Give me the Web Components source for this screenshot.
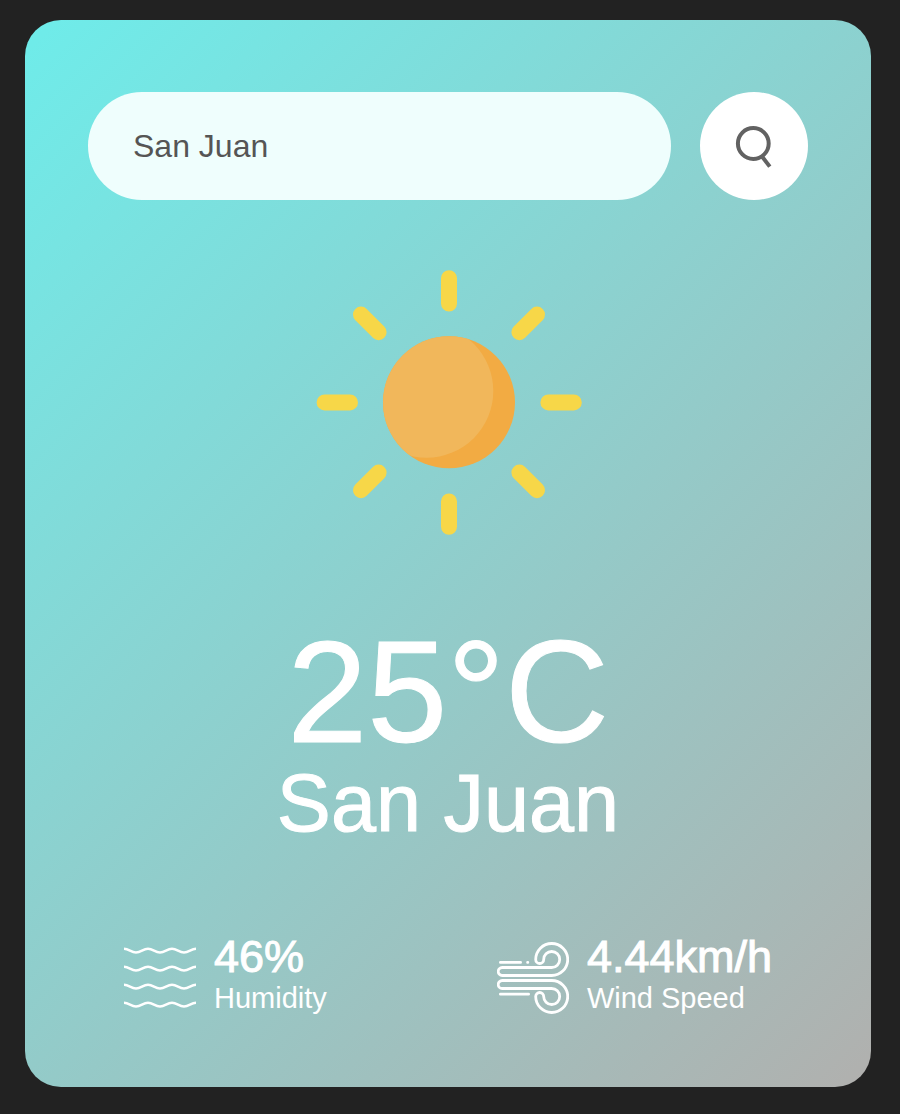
<!DOCTYPE html>
<html lang="en">
<head>
<meta charset="utf-8">
<meta name="viewport" content="width=device-width, initial-scale=1">
<title>Weather</title>
<style>
  body {
    margin: 0;
    padding: 20px 29px 27px 25px;
    background: #222;
    font-family: "Liberation Sans", Arial, sans-serif;
  }
</style>
</head>
<body>
<weather-card>
  <weather-search slot="search" value="San Juan"></weather-search>
  <weather-now temp="25°C" city="San Juan"></weather-now>
  <weather-stat slot="details" value="46%" label="Humidity">
    <svg slot="icon" width="72" height="72" viewBox="0 0 72 72" fill="none" stroke="#fff" stroke-width="2.5" aria-hidden="true">
      <path d="M0 6.8c5 0 7 3.6 12 3.6s7-3.6 12-3.6 7 3.6 12 3.6 7-3.6 12-3.6 7 3.6 12 3.6 7-3.6 12-3.6"/>
      <path d="M0 24.8c5 0 7 3.6 12 3.6s7-3.6 12-3.6 7 3.6 12 3.6 7-3.6 12-3.6 7 3.6 12 3.6 7-3.6 12-3.6"/>
      <path d="M0 42.8c5 0 7 3.6 12 3.6s7-3.6 12-3.6 7 3.6 12 3.6 7-3.6 12-3.6 7 3.6 12 3.6 7-3.6 12-3.6"/>
      <path d="M0 60.8c5 0 7 3.6 12 3.6s7-3.6 12-3.6 7 3.6 12 3.6 7-3.6 12-3.6 7 3.6 12 3.6 7-3.6 12-3.6"/>
    </svg>
  </weather-stat>
  <weather-stat slot="details" value="4.44km/h" label="Wind Speed">
    <svg slot="icon" width="72" height="72" viewBox="0 0 72 72" fill="none" stroke="#fff" stroke-width="2.8" stroke-linecap="round" aria-hidden="true">
      <path d="M5.2 25.5H54.7a8 8 0 1 0-8-8a4 4 0 0 1-8 0a16 16 0 1 1 16 16H5.2a4 4 0 0 1 0-8z"/>
      <path d="M5.2 46.5H54.7a8 8 0 1 1-8 8a4 4 0 0 0-8 0a16 16 0 1 0 16-16H5.2a4 4 0 0 0 0 8z"/>
      <path d="M3.4 20.4H23.6M30.6 20.4h.2M3.4 52.2H31.6"/>
    </svg>
  </weather-stat>
</weather-card>

<script>
  function attach(element, markup) {
    const root = element.attachShadow({ mode: "open" });
    root.innerHTML = markup;
    return root;
  }

  class WeatherCard extends HTMLElement {
    constructor() {
      super();
      attach(this, `
        <style>
          :host {
            display: block;
            box-sizing: border-box;
            padding: 72px 63px 71px;
            border-radius: 36px;
            background: linear-gradient(135deg, #6eecea, #b1b0ae);
            color: #fff;
            text-align: center;
          }
          .details {
            display: flex;
            justify-content: space-between;
            margin-top: 91px;
            padding: 0 36px;
          }
        </style>
        <slot name="search"></slot>
        <slot></slot>
        <div class="details"><slot name="details"></slot></div>`);
    }
  }

  class WeatherSearch extends HTMLElement {
    constructor() {
      super();
      const root = attach(this, `
        <style>
          :host { display: block; }
          form { display: flex; gap: 29px; }
          input, button {
            box-sizing: border-box;
            height: 108px;
            margin: 0;
            border: 0;
            outline: 0;
          }
          input {
            flex: 1;
            min-width: 0;
            padding: 0 45px;
            border-radius: 54px;
            background: #effefd;
            color: #555;
            font: 32px "Liberation Sans", Arial, sans-serif;
          }
          button {
            display: grid;
            place-items: center;
            width: 108px;
            padding: 0;
            border-radius: 50%;
            background: #fff;
            cursor: pointer;
          }
        </style>
        <form>
          <input type="text" aria-label="City" spellcheck="false">
          <button type="submit" aria-label="Search">
            <svg width="44" height="44" viewBox="0 0 44 44" fill="none" stroke="#626262" stroke-width="4">
              <circle cx="21.3" cy="19.5" r="15.4"/>
              <path d="M29.8 32.2L37.8 42.6"/>
            </svg>
          </button>
        </form>`);
      root.querySelector("input").value = this.getAttribute("value") || "";
      root.querySelector("form").addEventListener("submit", e => e.preventDefault());
    }
  }

  class WeatherNow extends HTMLElement {
    constructor() {
      super();
      const root = attach(this, `
        <style>
          :host { display: block; margin-top: 58px; }
          svg { display: block; margin: 0 auto 77px; }
          h1, h2 { margin: 0; font-weight: 400; -webkit-text-stroke: 1px currentColor; }
          h1 { font-size: 144px; line-height: 140px; }
          h2 { font-size: 81px; line-height: 80px; }
        </style>
        <svg width="288" height="288" viewBox="0 0 288 288" role="img" aria-label="Clear sky">
          <defs><clipPath id="disc"><circle cx="145" cy="144.3" r="66"/></clipPath></defs>
          <path fill="none" stroke="#f7d748" stroke-width="16" stroke-linecap="round"
            d="M145 20.2V45.6M145 243.4V268.8M20.6 144.4H46M244.4 144.4H269.8M57 56.6L74.6 74.2M233 56.6L215.4 74.2M57 232.2L74.6 214.6M233 232.2L215.4 214.6"/>
          <circle cx="145" cy="144.3" r="66" fill="#f2ab43"/>
          <circle cx="122.6" cy="133" r="66.7" fill="#f1b75b" clip-path="url(#disc)"/>
        </svg>
        <h1></h1>
        <h2></h2>`);
      root.querySelector("h1").textContent = this.getAttribute("temp");
      root.querySelector("h2").textContent = this.getAttribute("city");
    }
  }

  class WeatherStat extends HTMLElement {
    constructor() {
      super();
      const root = attach(this, `
        <style>
          :host { display: flex; align-items: flex-start; gap: 18px; text-align: left; }
          ::slotted(svg) { display: block; flex: none; margin-top: 8px; }
          p { margin: 0; }
          .value { font-size: 45px; line-height: 46px; -webkit-text-stroke: 1px currentColor; }
          .label { font-size: 29px; line-height: 36px; }
        </style>
        <slot name="icon"></slot>
        <div><p class="value"></p><p class="label"></p></div>`);
      root.querySelector(".value").textContent = this.getAttribute("value");
      root.querySelector(".label").textContent = this.getAttribute("label");
    }
  }

  customElements.define("weather-card", WeatherCard);
  customElements.define("weather-search", WeatherSearch);
  customElements.define("weather-now", WeatherNow);
  customElements.define("weather-stat", WeatherStat);
</script>
</body>
</html>
